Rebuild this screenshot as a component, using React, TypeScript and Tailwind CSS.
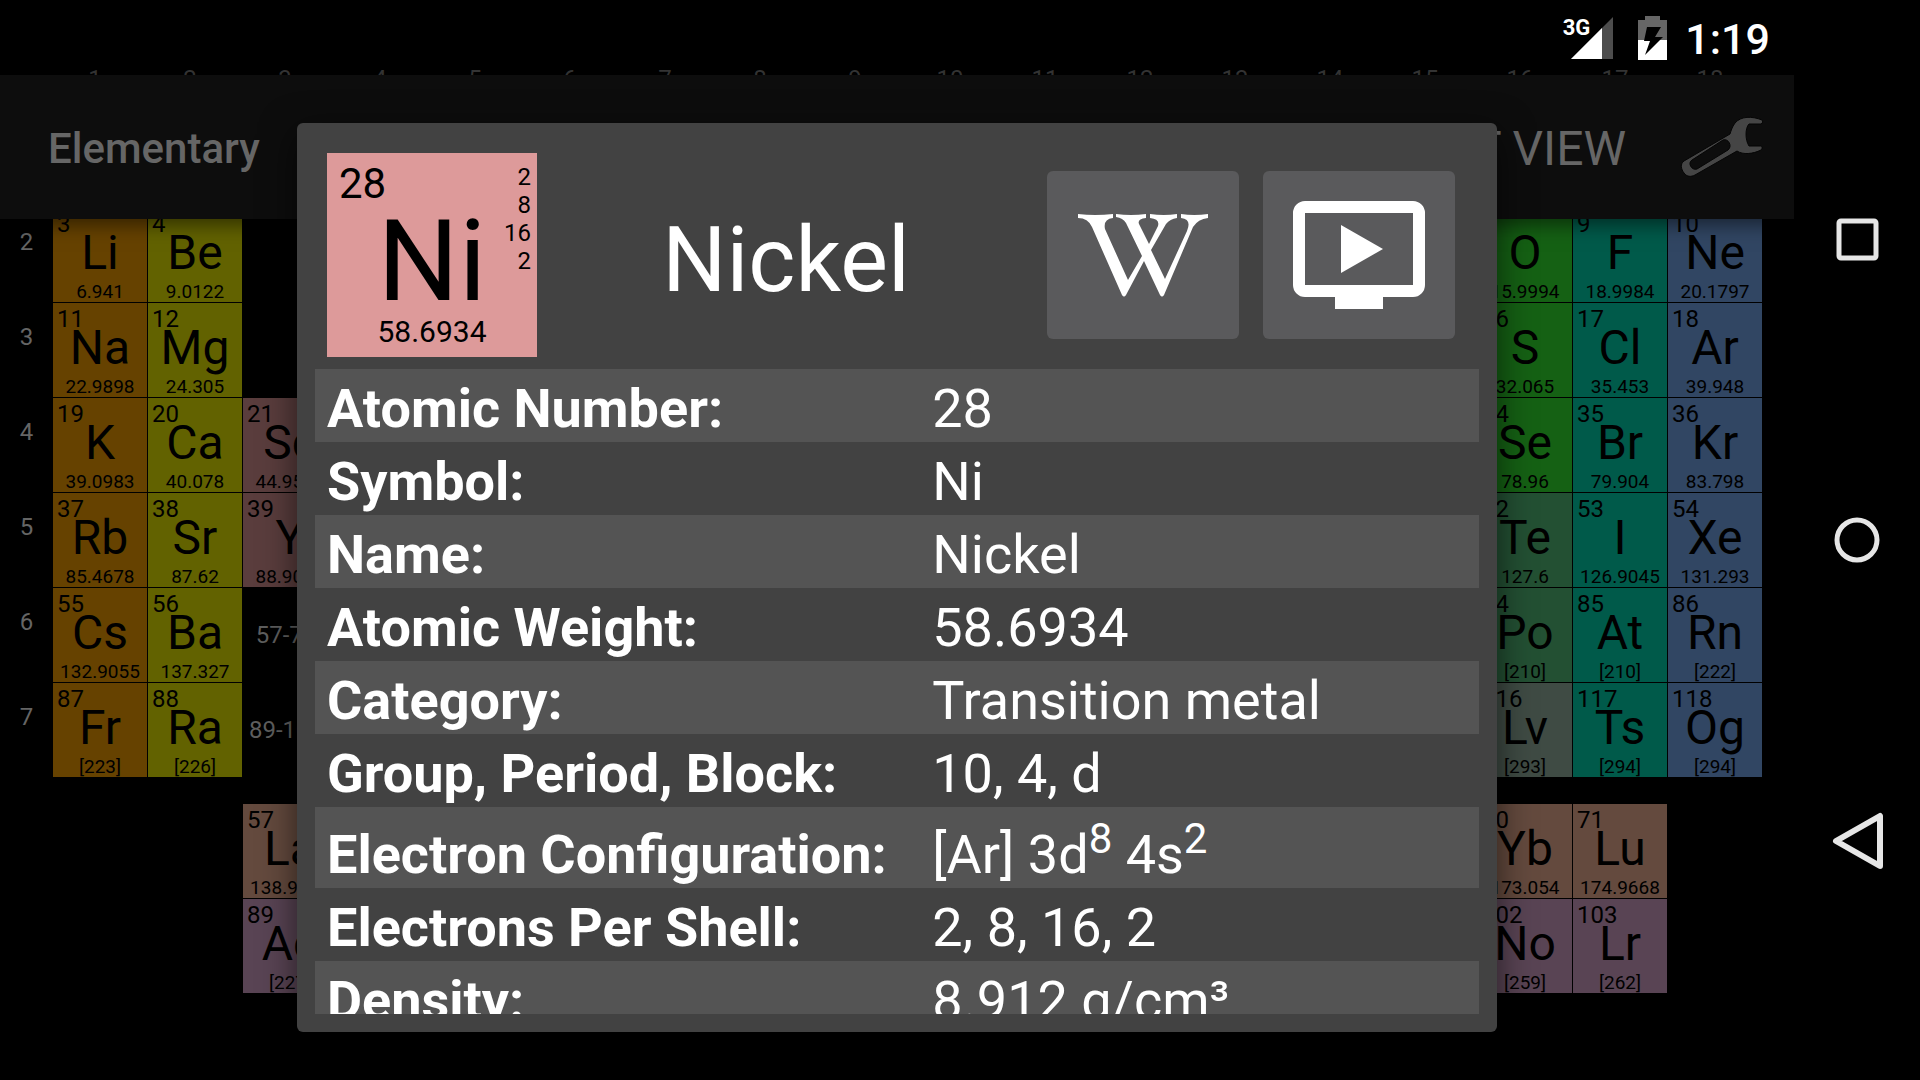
import React from "react";

type Cell = { n: string; s: string; w: string; row: string; col: string; color: string };

const alkali = "bg-[#664200]";
const earth = "bg-[#626200]";
const metal = "bg-[#5a3d3d]";
const nonmetal = "bg-[#156114]";
const halogen = "bg-[#005a4a]";
const noble = "bg-[#314663]";
const metalloid = "bg-[#235033]";
const post = "bg-[#3f4b44]";
const lanth = "bg-[#644a3e]";
const actin = "bg-[#594454]";

const C1 = "col-start-1", C2 = "col-start-2", C3 = "col-start-3", C16 = "col-start-16", C17 = "col-start-17", C18 = "col-start-18";
const R2 = "row-start-2", R3 = "row-start-3", R4 = "row-start-4", R5 = "row-start-5", R6 = "row-start-6", R7 = "row-start-7";
const RL = "row-start-9", RA = "row-start-10";

const cells: Cell[] = [
  { n: "3", s: "Li", w: "6.941", row: R2, col: C1, color: alkali },
  { n: "4", s: "Be", w: "9.0122", row: R2, col: C2, color: earth },
  { n: "8", s: "O", w: "15.9994", row: R2, col: C16, color: nonmetal },
  { n: "9", s: "F", w: "18.9984", row: R2, col: C17, color: halogen },
  { n: "10", s: "Ne", w: "20.1797", row: R2, col: C18, color: noble },
  { n: "11", s: "Na", w: "22.9898", row: R3, col: C1, color: alkali },
  { n: "12", s: "Mg", w: "24.305", row: R3, col: C2, color: earth },
  { n: "16", s: "S", w: "32.065", row: R3, col: C16, color: nonmetal },
  { n: "17", s: "Cl", w: "35.453", row: R3, col: C17, color: halogen },
  { n: "18", s: "Ar", w: "39.948", row: R3, col: C18, color: noble },
  { n: "19", s: "K", w: "39.0983", row: R4, col: C1, color: alkali },
  { n: "20", s: "Ca", w: "40.078", row: R4, col: C2, color: earth },
  { n: "21", s: "Sc", w: "44.9559", row: R4, col: C3, color: metal },
  { n: "34", s: "Se", w: "78.96", row: R4, col: C16, color: nonmetal },
  { n: "35", s: "Br", w: "79.904", row: R4, col: C17, color: halogen },
  { n: "36", s: "Kr", w: "83.798", row: R4, col: C18, color: noble },
  { n: "37", s: "Rb", w: "85.4678", row: R5, col: C1, color: alkali },
  { n: "38", s: "Sr", w: "87.62", row: R5, col: C2, color: earth },
  { n: "39", s: "Y", w: "88.9058", row: R5, col: C3, color: metal },
  { n: "52", s: "Te", w: "127.6", row: R5, col: C16, color: metalloid },
  { n: "53", s: "I", w: "126.9045", row: R5, col: C17, color: halogen },
  { n: "54", s: "Xe", w: "131.293", row: R5, col: C18, color: noble },
  { n: "55", s: "Cs", w: "132.9055", row: R6, col: C1, color: alkali },
  { n: "56", s: "Ba", w: "137.327", row: R6, col: C2, color: earth },
  { n: "84", s: "Po", w: "[210]", row: R6, col: C16, color: metalloid },
  { n: "85", s: "At", w: "[210]", row: R6, col: C17, color: halogen },
  { n: "86", s: "Rn", w: "[222]", row: R6, col: C18, color: noble },
  { n: "87", s: "Fr", w: "[223]", row: R7, col: C1, color: alkali },
  { n: "88", s: "Ra", w: "[226]", row: R7, col: C2, color: earth },
  { n: "116", s: "Lv", w: "[293]", row: R7, col: C16, color: post },
  { n: "117", s: "Ts", w: "[294]", row: R7, col: C17, color: halogen },
  { n: "118", s: "Og", w: "[294]", row: R7, col: C18, color: noble },
  { n: "57", s: "La", w: "138.9055", row: RL, col: C3, color: lanth },
  { n: "70", s: "Yb", w: "173.054", row: RL, col: C16, color: lanth },
  { n: "71", s: "Lu", w: "174.9668", row: RL, col: C17, color: lanth },
  { n: "89", s: "Ac", w: "[227]", row: RA, col: C3, color: actin },
  { n: "102", s: "No", w: "[259]", row: RA, col: C16, color: actin },
  { n: "103", s: "Lr", w: "[262]", row: RA, col: C17, color: actin },
];

const groups = Array.from({ length: 18 }, (_, i) => String(i + 1));
const periods = ["1", "2", "3", "4", "5", "6", "7"];

const facts: [string, React.ReactNode][] = [
  ["Atomic Number", "28"],
  ["Symbol", "Ni"],
  ["Name", "Nickel"],
  ["Atomic Weight", "58.6934"],
  ["Category", "Transition metal"],
  ["Group, Period, Block", "10, 4, d"],
  ["Electron Configuration", <>[Ar] 3d<Sup>8</Sup> 4s<Sup>2</Sup></>],
  ["Electrons Per Shell", "2, 8, 16, 2"],
  ["Density", "8.912 g/cm³"],
];

function Sup({ children }: { children: React.ReactNode }) {
  return <sup className="top-0 align-[20px] text-[42px] leading-[48px]">{children}</sup>;
}

function ElementCell({ n, s, w, row, col, color }: Cell) {
  return (
    <div className={`${row} ${col} ${color} flex flex-col overflow-hidden text-black`}>
      <span className="pl-1 pt-1 text-2xl leading-6">{n}</span>
      <span className="text-center text-5xl leading-[34px]">{s}</span>
      <span className="pt-3 text-center text-[19px] leading-5">{w}</span>
    </div>
  );
}

function PeriodicTable() {
  return (
    <main className="flex min-w-0 pt-[60px]">
      <div className="grid w-[53px] shrink-0 auto-rows-[95px] pt-[53px] text-center text-2xl text-[#656565]">
        {periods.map((p) => (
          <span key={p} className="pt-[18px]">{p}</span>
        ))}
      </div>
      <div className="min-w-0 flex-1 pr-8">
        <div className="grid h-[53px] grid-cols-[repeat(18,minmax(0,1fr))] gap-px text-center text-2xl text-[#383838]">
          {groups.map((g) => (
            <span key={g} className="pr-2.5 pt-[3px]">{g}</span>
          ))}
        </div>
        <div className="grid grid-cols-[repeat(18,minmax(0,1fr))] grid-rows-[repeat(7,94px)_25px_94px_94px] gap-px">
          {cells.map((c) => (
            <ElementCell key={c.n} {...c} />
          ))}
          <span className="col-start-3 row-start-6 self-center pr-2 text-center text-2xl text-[#5e5e5e]">57-71</span>
          <span className="col-start-3 row-start-7 self-center pr-2 text-center text-2xl text-[#5e5e5e]">89-103</span>
        </div>
      </div>
    </main>
  );
}

function StatusBar() {
  return (
    <div className="flex h-[75px] items-center justify-end pr-6">
      <div className="mr-6 flex items-start">
        <span className="text-[22px] font-bold leading-6 text-white">3G</span>
        <svg className="-ml-5 h-11 w-11" viewBox="0 0 44 44" aria-label="Signal">
          <path d="M1 43 43 1V43Z" fill="#4d4d4d" />
          <path d="M1 43 32 12V43Z" fill="#fff" />
        </svg>
      </div>
      <svg className="mr-[18px] h-11 w-[29px]" viewBox="0 0 29 44" aria-label="Battery charging">
        <path d="M7 0H22V4H29V24H0V4H7Z" fill="#666" />
        <path d="M0 24H29V44H0Z" fill="#fff" />
        <path d="M9 11H23L17 21H25L7 39 12 25H6Z" fill="#000" />
      </svg>
      <span className="pt-1 text-[43px] font-medium leading-none text-white">1:19</span>
    </div>
  );
}

function AppBar() {
  return (
    <header className="flex h-36 items-center bg-[#0d0d0d] pl-12 pr-[30px] text-[#666] shadow-[0_6px_18px_rgba(0,0,0,0.5)]">
      <h1 className="flex-1 pt-0.5 text-[42px] font-medium">Elementary</h1>
      <button type="button" className="mr-[54px] pt-1 text-5xl">TEXT VIEW</button>
      <button type="button" aria-label="Settings">
        <svg className="h-16 w-[84px]" viewBox="0 0 84 64">
          <path
            fillRule="evenodd"
            fill="#454545"
            stroke="#050505"
            strokeWidth="1"
            d="M82 5C72 1 61 1 55 8C52 12 51 16 50 19L4 46C0 49 1 54 4 58C7 62 11 62 15 60L57 36C63 40 73 39 81 35C83 33 82 31 80 31L69 31C65 25 65 13 69 9L81 9C83 8 83 6 82 5ZM43 25C48 23 53 31 48 35L17 54C12 56 7 48 12 45Z"
          />
        </svg>
      </button>
    </header>
  );
}

function NavBar() {
  return (
    <nav className="flex w-[126px] shrink-0 flex-col items-center justify-between py-[210px]">
      <button type="button" aria-label="Recent apps">
        <svg className="h-[60px] w-[60px]" viewBox="0 0 60 60" fill="none" stroke="#e6e6e6">
          <rect x="12" y="11" width="37" height="37" rx="2" strokeWidth="5" />
        </svg>
      </button>
      <button type="button" aria-label="Home">
        <svg className="h-[60px] w-[60px]" viewBox="0 0 60 60" fill="none" stroke="#e6e6e6">
          <circle cx="30" cy="30" r="20" strokeWidth="5" />
        </svg>
      </button>
      <button type="button" aria-label="Back">
        <svg className="h-[60px] w-[60px]" viewBox="0 0 60 60" fill="none" stroke="#e6e6e6">
          <path d="M53 6V56L9 31Z" strokeWidth="6" strokeLinejoin="round" />
        </svg>
      </button>
    </nav>
  );
}

function NickelDialog() {
  return (
    <section
      role="dialog"
      aria-label="Nickel"
      className="absolute inset-x-[297px] bottom-12 top-[123px] flex flex-col overflow-hidden rounded-md bg-[#424242] px-[18px] pb-[18px] pt-[30px] text-white"
    >
      <div className="flex items-center pb-3 pl-3 pr-6">
        <div className="flex h-[204px] w-[210px] shrink-0 bg-[#dd9a9a] text-black">
          <div className="flex flex-1 flex-col pl-3">
            <span className="pt-2 text-[42px] leading-[46px]">28</span>
            <span className="pl-6 text-center text-[114px] leading-[108px]">Ni</span>
            <span className="pl-6 text-center text-[30px] leading-[34px]">58.6934</span>
          </div>
          <div className="flex w-9 flex-col pr-1.5 pt-2.5 text-right text-2xl leading-7">
            <span>2</span>
            <span>8</span>
            <span>16</span>
            <span>2</span>
          </div>
        </div>
        <h2 className="flex-1 pr-3 pt-3 text-center text-[90px] leading-none">Nickel</h2>
        <div className="flex gap-6">
          <button type="button" aria-label="Wikipedia" className="flex h-[168px] w-48 items-center justify-center rounded-md bg-[#5a5a5c]">
            <svg className="h-[84px] w-[132px]" viewBox="0 0 132 84" fill="#fff">
              <path d="M1 1Q18 3 36 1V5Q26 6 28 16L51 67 65 43 49 10Q46 5 39 4V1Q54 3 69 1V5Q60 6 62 11L72 31 81 13Q83 6 73 5V1Q87 3 100 1V5Q93 6 89 11L74 37 88 66 110 18Q115 6 104 5V1Q117 3 131 1V5Q121 6 116 14L87 82Q85 85 83 82L67 48 49 82Q47 85 45 82L15 14Q11 5 1 5Z" />
            </svg>
          </button>
          <button type="button" aria-label="Video" className="flex h-[168px] w-48 items-center justify-center rounded-md bg-[#5a5a5c]">
            <svg className="h-[108px] w-[132px]" viewBox="0 0 132 108" fill="none">
              <rect x="6" y="6" width="120" height="84" rx="6" stroke="#fff" strokeWidth="12" />
              <rect x="12" y="12" width="108" height="72" fill="#5a5a5c" />
              <path d="M48 24 90 48 48 72ZM42 96H90V108H42Z" fill="#fff" />
            </svg>
          </button>
        </div>
      </div>
      <div className="min-h-0 flex-1 overflow-hidden">
        <table className="w-full table-fixed border-collapse text-left text-[54px]">
          <tbody>
            {facts.map(([label, value]) => (
              <tr key={label} className="odd:bg-[#545454]">
                <th scope="row" className="w-[52%] pb-0.5 pl-3 pt-2 align-bottom font-bold leading-[63px]">{label}:</th>
                <td className="pb-0.5 pl-3 pt-2 align-bottom leading-[63px]">{value}</td>
              </tr>
            ))}
          </tbody>
        </table>
      </div>
    </section>
  );
}

export default function App() {
  return (
    <div className="relative flex h-screen overflow-hidden bg-black font-['Roboto',sans-serif]">
      <div className="relative min-w-0 flex-1">
        <PeriodicTable />
        <div className="absolute inset-x-0 top-0">
          <StatusBar />
          <AppBar />
        </div>
        <div className="absolute inset-x-[297px] bottom-12 top-[123px] rounded-md shadow-[0_10px_36px_rgba(0,0,0,0.6)]" />
        <NickelDialog />
      </div>
      <NavBar />
    </div>
  );
}
